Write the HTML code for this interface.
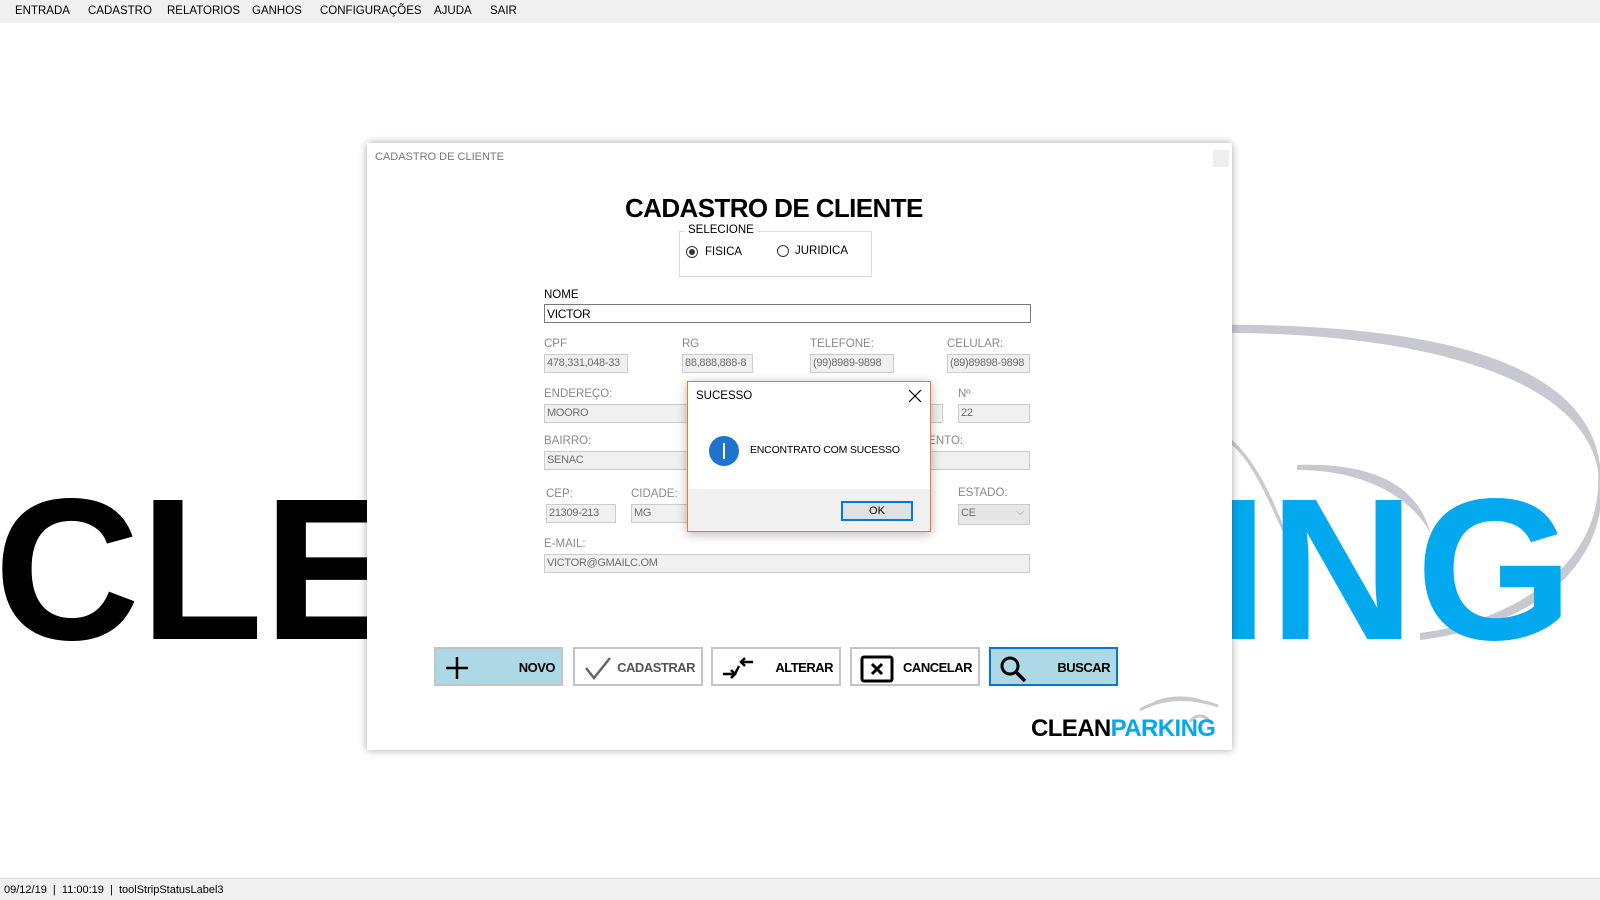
<!DOCTYPE html>
<html><head><meta charset="utf-8"><style>
*{margin:0;padding:0;box-sizing:border-box}
body{width:1600px;height:900px;position:relative;overflow:hidden;background:#fff;font-family:"Liberation Sans",sans-serif;font-size:12px;color:#000}
.a{position:absolute;white-space:nowrap}
.menu{left:0;top:0;width:1600px;height:23px;background:#f0f0f0}
.menu span{position:absolute;top:5px;font-size:11.5px}
.status{left:0;top:878px;width:1600px;height:22px;background:#f0f0f0;border-top:1px solid #dcdcdc;font-size:11px;padding:5px 4px}
.big{font-weight:bold;font-size:202px;line-height:1}
.dlg{left:367px;top:143px;width:865px;height:607px;background:#fff;box-shadow:0 0 8px rgba(0,0,0,.35)}
.lbl{font-size:11.5px;color:#8a8a8a}
.in{position:absolute;height:19px;background:#f0f0f0;border:1px solid #ccc;color:#6d6d6d;font-size:11px;padding:2px 2px;white-space:nowrap;overflow:hidden;letter-spacing:-.3px}
.btn{position:absolute;top:647px;height:39px;border:2px solid #c4c4c4;background:#fff;font-weight:bold;font-size:13px;letter-spacing:-.5px}
.btn b{position:absolute;right:6px;top:11px}
.btn svg{position:absolute;left:8px;top:6px}
</style></head><body>
<div class="a menu">
<span style="left:15px">ENTRADA</span><span style="left:88px">CADASTRO</span><span style="left:167px">RELATORIOS</span><span style="left:252px">GANHOS</span><span style="left:320px">CONFIGURAÇÕES</span><span style="left:434px">AJUDA</span><span style="left:490px">SAIR</span>
</div>

<svg class="a" style="left:0;top:0" width="1600" height="900">
<path d="M1200 333 C1400 330 1580 370 1598 470 C1605 560 1520 620 1420 633 L1420 640 C1540 625 1615 560 1600 465 C1585 350 1400 322 1200 325 Z" fill="#c8c9d0"/>
<path d="M1232 445 C1260 470 1275 520 1290 545 L1292 550 C1275 500 1255 460 1232 440Z" fill="#c8c9d0"/>
<path d="M1297 465 C1380 462 1420 490 1431 535 C1420 510 1380 470 1297 470Z" fill="#c8c9d0"/>
</svg>
<div class="a big" style="left:-6px;top:468px">CLEAN</div>
<div class="a big" style="left:1212px;top:468px;color:#03a9ee;letter-spacing:1px">ING</div>

<div class="a dlg">
<div class="a" style="left:8px;top:8px;color:#777;font-size:11px">CADASTRO DE CLIENTE</div>
<div class="a" style="left:846px;top:7px;width:16px;height:17px;background:#eee"></div>
</div>
<div class="a" style="left:625px;top:193px;font-size:26px;font-weight:bold;letter-spacing:-.6px">CADASTRO DE CLIENTE</div>
<div class="a" style="left:679px;top:231px;width:193px;height:46px;border:1px solid #dcdcdc"></div>
<div class="a" style="left:685px;top:224px;background:#fff;padding:0 3px;font-size:11.5px">SELECIONE</div>
<div class="a" style="left:686px;top:246px;width:12px;height:12px;border:1px solid #333;border-radius:50%"><div style="margin:2px;width:6px;height:6px;border-radius:50%;background:#333"></div></div>
<div class="a" style="left:705px;top:246px;font-size:11.5px">FISICA</div>
<div class="a" style="left:777px;top:245px;width:12px;height:12px;border:1px solid #333;border-radius:50%"></div>
<div class="a" style="left:795px;top:245px;font-size:11.5px">JURIDICA</div>

<div class="a" style="left:544px;top:289px;font-size:11.5px">NOME</div>
<div class="in" style="left:544px;top:304px;width:487px;background:#fff;border-color:#7a7a7a;color:#000;font-size:12px">VICTOR</div>

<div class="a lbl" style="left:544px;top:338px">CPF</div>
<div class="a lbl" style="left:682px;top:338px">RG</div>
<div class="a lbl" style="left:810px;top:338px">TELEFONE:</div>
<div class="a lbl" style="left:947px;top:338px">CELULAR:</div>
<div class="in" style="left:544px;top:354px;width:84px">478,331,048-33</div>
<div class="in" style="left:682px;top:354px;width:71px">88,888,888-8</div>
<div class="in" style="left:810px;top:354px;width:84px">(99)8989-9898</div>
<div class="in" style="left:947px;top:354px;width:83px">(89)89898-9898</div>

<div class="a lbl" style="left:544px;top:388px">ENDEREÇO:</div>
<div class="a lbl" style="left:958px;top:388px">Nº</div>
<div class="in" style="left:544px;top:404px;width:399px">MOORO</div>
<div class="in" style="left:958px;top:404px;width:72px">22</div>

<div class="a lbl" style="left:544px;top:435px">BAIRRO:</div>
<div class="a lbl" style="left:870px;top:435px">COMPLEMENTO:</div>
<div class="in" style="left:544px;top:451px;width:220px">SENAC</div>
<div class="in" style="left:800px;top:451px;width:230px"></div>

<div class="a lbl" style="left:546px;top:488px">CEP:</div>
<div class="a lbl" style="left:631px;top:488px">CIDADE:</div>
<div class="a lbl" style="left:958px;top:487px">ESTADO:</div>
<div class="in" style="left:546px;top:504px;width:70px">21309-213</div>
<div class="in" style="left:631px;top:504px;width:150px">MG</div>
<div class="in" style="left:958px;top:504px;width:72px;height:21px;background:#e6e6e6">CE<span style="position:absolute;right:5px;top:1px;color:#999">⌵</span></div>

<div class="a lbl" style="left:544px;top:538px">E-MAIL:</div>
<div class="in" style="left:544px;top:554px;width:486px">VICTOR@GMAILC.OM</div>

<div class="btn" style="left:434px;width:129px;background:#add8e6"><svg width="26" height="26"><path d="M13 2V24M2 13H24" stroke="#000" stroke-width="2.5"/></svg><b>NOVO</b></div>
<div class="btn" style="left:573px;width:130px;color:#555"><svg width="30" height="26"><path d="M3 13L11 23L27 3" stroke="#666" stroke-width="2.5" fill="none"/></svg><b>CADASTRAR</b></div>
<div class="btn" style="left:711px;width:130px"><svg width="34" height="26"><path d="M2 19H14M10 15L14 19L10 23M14 19L18 11M32 7H20M24 3L20 7L24 11" stroke="#000" stroke-width="2.5" fill="none"/></svg><b>ALTERAR</b></div>
<div class="btn" style="left:850px;width:130px"><svg width="34" height="28"><rect x="2" y="2" width="30" height="24" fill="none" stroke="#000" stroke-width="3" rx="2"/><path d="M12 9L22 19M22 9L12 19" stroke="#000" stroke-width="3"/></svg><b>CANCELAR</b></div>
<div class="btn" style="left:989px;width:129px;background:#add8e6;border-color:#0078d7"><svg width="30" height="28"><circle cx="11" cy="11" r="8" fill="none" stroke="#000" stroke-width="3"/><path d="M17 17L26 26" stroke="#000" stroke-width="3.5"/></svg><b>BUSCAR</b></div>

<svg class="a" style="left:1120px;top:692px" width="100" height="40"><path d="M20 18C40 6 70 4 98 14" stroke="#c8c9d0" stroke-width="3" fill="none"/><path d="M35 10C50 4 70 4 85 10" stroke="#c8c9d0" stroke-width="2" fill="none"/><path d="M70 30C75 22 85 22 90 30" stroke="#c8c9d0" stroke-width="3" fill="none"/></svg>
<div class="a" style="left:1031px;top:715px;font-size:24px;font-weight:bold;letter-spacing:-.6px">CLEAN<span style="color:#03a9ee">PARKING</span></div>

<div class="a" style="left:687px;top:381px;width:244px;height:151px;background:#fff;border:1px solid #f0772d;box-shadow:0 2px 10px rgba(0,0,0,.3)">
<div class="a" style="left:8px;top:8px;font-size:11.5px">SUCESSO</div>
<svg class="a" style="left:220px;top:7px" width="14" height="14"><path d="M1 1L13 13M13 1L1 13" stroke="#000" stroke-width="1.2"/></svg>
<svg class="a" style="left:21px;top:54px" width="30" height="30"><circle cx="15" cy="15" r="15" fill="#1e73cf"/><rect x="14" y="7" width="2" height="16" fill="#fff"/></svg>
<div class="a" style="left:62px;top:62px;font-size:10.5px;letter-spacing:-.2px">ENCONTRATO COM SUCESSO</div>
<div class="a" style="left:0;top:107px;width:242px;height:42px;background:#f0f0f0"></div>
<div class="a" style="left:153px;top:119px;width:72px;height:20px;border:2px solid #0078d7;background:#e1e1e1;font-size:11px;text-align:center;line-height:16px">OK</div>
</div>

<div class="a status">09/12/19 &nbsp;| &nbsp;11:00:19 &nbsp;| &nbsp;toolStripStatusLabel3</div>
</body></html>
